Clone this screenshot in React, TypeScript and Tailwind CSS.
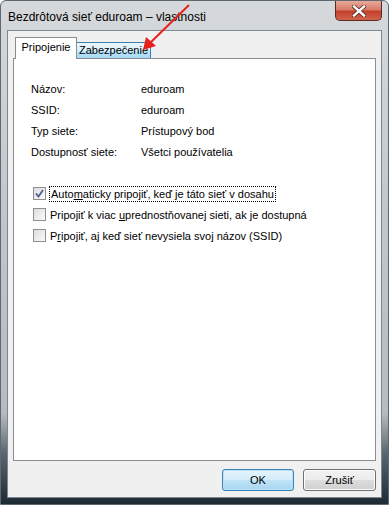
import type { ReactNode } from 'react'

const font = { fontFamily: '"Liberation Sans", Arial, sans-serif' }

function InfoRow({ label, value }: { label: string; value: string }) {
  return (
    <div className="flex h-[21px] items-center">
      <span className="w-[110px]">{label}</span>
      <span>{value}</span>
    </div>
  )
}

function CheckRow({
  checked,
  focused,
  children,
}: {
  checked?: boolean
  focused?: boolean
  children: ReactNode
}) {
  return (
    <div className="flex h-[21px] items-center">
      <span className="flex h-[13px] w-[13px] items-center justify-center border border-[#8f8f8f] bg-gradient-to-br from-[#dcdcdc] to-[#fbfbfb]">
        {checked && (
          <svg width="9" height="9" viewBox="0 0 9 9">
            <path d="M1 4.5 L3.5 7.5 L8 1" fill="none" stroke="#4a5f97" strokeWidth="1.8" />
          </svg>
        )}
      </span>
      <span
        className={
          focused
            ? 'ml-[3px] border border-dotted border-black px-[1px] leading-[14px]'
            : 'ml-[4px] leading-[14px]'
        }
      >
        {children}
      </span>
    </div>
  )
}

export default function App() {
  return (
    <div
      style={font}
      className="relative flex h-[505px] w-[389px] flex-col overflow-hidden rounded-t-[6px] border border-[#5f6870] bg-[linear-gradient(to_bottom,#d6d9dc_0%,#c3c7cb_40%,#b6bbc0_82%,#59666f_90%,#1d2a33_100%)] text-[11px] text-black"
    >
      {/* Title bar */}
      <div className="flex h-[29px] shrink-0 items-start justify-between">
        <span className="mt-[7px] pl-[7px] text-[12px]">Bezdrôtová sieť eduroam – vlastnosti</span>
        <div className="mr-[6px] flex h-[20px] w-[47px] items-center justify-center rounded-b-[5px] border border-t-0 border-[#5b2a23] bg-[linear-gradient(to_bottom,#e9ab9c_0%,#d77a68_45%,#c2412c_55%,#d0634b_100%)]">
          <svg width="14" height="12" viewBox="0 0 14 12">
            <path d="M2 1.5 L12 10.5 M12 1.5 L2 10.5" stroke="#5a2a22" strokeWidth="4" strokeLinecap="square" />
            <path d="M2 1.5 L12 10.5 M12 1.5 L2 10.5" stroke="#ffffff" strokeWidth="2.4" strokeLinecap="square" />
          </svg>
        </div>
      </div>

      {/* Client area */}
      <div className="mx-[6px] mb-[6px] flex flex-1 flex-col border border-[#7f8890] bg-[#f0f0f0] px-[5px] pt-[6px]">
        {/* Tabs */}
        <div className="flex h-[21px] items-end pl-[2px]">
          <div className="relative z-10 -mb-px flex h-[22px] w-[62px] items-center justify-center border border-b-0 border-[#898c95] bg-white pb-[2px]">
            Pripojenie
          </div>
          <div className="-ml-px flex h-[16px] w-[75px] items-center justify-center border border-b-0 border-[#3c7fb1] bg-[linear-gradient(to_bottom,#eaf6fd_0%,#d9f0fc_50%,#bee6fd_51%,#a7d9f5_100%)]">
            Zabezpečenie
          </div>
        </div>

        {/* Panel */}
        <div className="h-[403px] border border-[#898c95] bg-white pl-[17px] pt-[20px]">
          <InfoRow label="Názov:" value="eduroam" />
          <InfoRow label="SSID:" value="eduroam" />
          <InfoRow label="Typ siete:" value="Prístupový bod" />
          <InfoRow label="Dostupnosť siete:" value="Všetci používatelia" />

          <div className="mt-[20px] pl-[2px]">
            <CheckRow checked focused>
              Auto<u>m</u>aticky pripojiť, keď je táto sieť v dosahu
            </CheckRow>
            <CheckRow>
              Pripojiť k viac <u>u</u>prednostňovanej sieti, ak je dostupná
            </CheckRow>
            <CheckRow>
              P<u>r</u>ipojiť, aj keď sieť nevysiela svoj názov (SSID)
            </CheckRow>
          </div>
        </div>

        {/* Buttons */}
        <div className="mt-[8px] flex justify-end gap-[9px]">
          <button className="flex h-[22px] w-[72px] items-center justify-center rounded-[3px] border border-[#3c7fb1] bg-[linear-gradient(to_bottom,#e5f4fc_0%,#d3ecfa_50%,#bfe3f7_51%,#a9d6f2_100%)] shadow-[inset_0_0_0_1px_#b8e2f8]">
            OK
          </button>
          <button className="flex h-[22px] w-[73px] items-center justify-center rounded-[3px] border border-[#707070] bg-[linear-gradient(to_bottom,#f2f2f2_0%,#ebebeb_50%,#dddddd_51%,#cfcfcf_100%)] shadow-[inset_0_0_0_1px_#fcfcfc]">
            Zrušiť
          </button>
        </div>
      </div>

      {/* Red annotation arrow */}
      <svg className="pointer-events-none absolute left-[-1px] top-[-1px]" width="389" height="505">
        <line x1="189" y1="5" x2="150" y2="43" stroke="#e8201b" strokeWidth="2" />
        <path d="M143 50 L146 37 L156 46 Z" fill="#e8201b" />
      </svg>
    </div>
  )
}
